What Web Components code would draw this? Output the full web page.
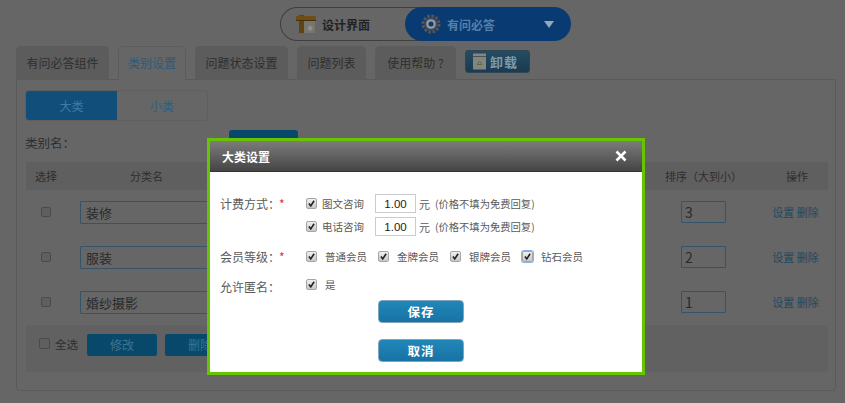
<!DOCTYPE html>
<html lang="zh">
<head>
<meta charset="utf-8">
<title>类别设置</title>
<style>
  html, body { margin: 0; height: 100%; background: #666; }
  body { font: 12px "Noto Sans CJK SC", "Liberation Sans", sans-serif; overflow: hidden; }
</style>
</head>
<body>
<app-page></app-page>

<script>
// small helper so each class just declares its shadow html
class Base extends HTMLElement {
    connectedCallback() {
        if (!this.shadowRoot) this.attachShadow({ mode: 'open' }).innerHTML = this.render();
    }
}

class CheckBox extends Base {
    render() {
        const on = this.hasAttribute('checked');
        const focus = this.hasAttribute('focus');
        return `
            <style>
                :host { display: inline-block; width: var(--size, 11px); height: var(--size, 11px); flex: none; }
                .b { box-sizing: border-box; width: 100%; height: 100%; border-radius: 2px;
                     border: 1px solid ${on ? '#a5a5a5' : '#4a4a4a'};
                     background: ${on ? 'linear-gradient(#f0f0f0,#c8c8c8)' : '#5f5f5f'};
                     ${focus ? 'box-shadow: 0 0 0 1px #8fb0ea;' : ''} }
                svg { display: block; width: 100%; height: 100%; }
            </style>
            <div class="b">${on ? '<svg viewBox="0 0 11 11"><path d="M2.3 5.6 4.6 8.4 8.7 2.2" fill="none" stroke="#222" stroke-width="2"/></svg>' : ''}</div>`;
    }
}

class SwitchBar extends Base {
    render() {
        return `
            <style>
                :host { display: flex; margin-left: 280px; height: 34px; font-size: 12px; font-weight: 700; }
                .left { box-sizing: border-box; width: 140px; border: 1px solid #3f3f3f; border-right: 0;
                        border-radius: 17px 0 0 17px; display: flex; align-items: center; padding-left: 15px; gap: 6px; color: #222; }
                .right { width: 166px; margin-left: -15px; background: #0a3a72; border-radius: 17px; display: flex;
                         align-items: center; padding-left: 16px; box-sizing: border-box; color: #5580ab; }
                .right span { margin-left: 6px; }
                .tri { width: 0; height: 0; border: 5.5px solid transparent; border-top: 7px solid #93a8bd; border-bottom: 0; margin-left: 49px; }
            </style>
            <div class="left">
                <svg width="20" height="20" viewBox="0 0 20 20">
                    <rect x="8" y="5" width="11" height="14" fill="#77756e"/>
                    <path d="M11 15l3-4 3 3-2 3z" fill="#908e87"/>
                    <rect x="3" y="1" width="5" height="18" fill="#5f4312"/>
                    <rect x="0" y="2" width="20" height="5" fill="#6d4e16"/>
                    <rect x="0" y="6" width="20" height="1" fill="#463009"/>
                </svg>
                设计界面
            </div>
            <div class="right">
                <svg width="20" height="20" viewBox="0 0 20 20">
                    <circle cx="10" cy="10" r="8" fill="none" stroke="#55575a" stroke-width="3" stroke-dasharray="2.6 1.6"/>
                    <circle cx="10" cy="10" r="6.6" fill="#47494b"/>
                    <circle cx="10" cy="10" r="4.8" fill="#8b9cab"/>
                    <circle cx="10" cy="10" r="2.5" fill="#103a6a"/>
                </svg>
                <span>有问必答</span>
                <div class="tri"></div>
            </div>`;
    }
}

class TabStrip extends Base {
    render() {
        const tabs = ['有问必答组件', '类别设置', '问题状态设置', '问题列表'];
        return `
            <style>
                :host { display: flex; margin: 5px 0 0 16px; height: 34px; gap: 9px; position: relative; z-index: 1; }
                .t { padding: 0 10.5px; height: 34px; line-height: 34px; box-sizing: border-box; background: #5c5c5c; color: #2e2e2e;
                     border-radius: 5px 5px 0 0; white-space: nowrap; }
                .help { width: 81px; padding: 0; text-align: center; }
                .on { background: #666; color: #2c5a7c; border: 1px solid #5c5c5c; border-bottom: 0; padding: 0 9px; line-height: 32px; height: 35px; }
                .un { margin-top: 4px; height: 23px; width: 65px; box-sizing: border-box; border: 1px solid #2d4657; border-radius: 3px;
                      background: linear-gradient(#264b61,#1a3b50); display: flex; align-items: center; padding-left: 6px; gap: 3px;
                      color: #7f99a9; font-size: 13px; font-weight: 700; letter-spacing: 1px; }
            </style>
            ${tabs.map((t, i) => `<div class="t ${i == 1 ? 'on' : ''}">${t}</div>`).join('')}
            <div class="t help">使用帮助 ?</div>
            <div class="un">
                <svg width="15" height="17" viewBox="0 0 15 17">
                    <rect x="1" y="0.5" width="13" height="16" fill="#85857f"/>
                    <rect x="1" y="3" width="13" height="1" fill="#4f4f4f"/>
                    <path d="M5 11.5 7.5 8 10 11.5z" fill="none" stroke="#566f4a" stroke-width="1"/>
                </svg>
                卸载
            </div>`;
    }
}

class SubTabs extends Base {
    render() {
        return `
            <style>
                :host { display: flex; width: 183px; height: 31px; box-sizing: border-box; border: 1px solid #5f5f5f; border-radius: 3px; text-align: center; line-height: 29px; }
                div { flex: 1; color: #2c5f88; }
                .on { flex: none; width: 91px; background: #114f7a; color: #427aa3; border-radius: 3px 0 0 3px; }
            </style>
            <div class="on">大类</div><div>小类</div>`;
    }
}

class CatRow extends Base {
    render() {
        return `
            <style>
                :host { display: grid; grid-template-columns: 55px 560px 125px 62px; height: 45px; align-items: start; color: #333; }
                check-box { --size: 10px; margin: 6px 0 0 15px; }
                input { box-sizing: border-box; font: 13px "Noto Sans CJK SC", "Liberation Sans", sans-serif; color: #2a2a2a; background: #666;
                        border: 1px solid #35546a; height: 23px; padding: 0 5px; outline: 0; display: block; border-radius: 1px; }
                .name { width: 300px; margin-left: -1px; }
                .sort { width: 45px; margin-left: 40px; font-size: 14px; height: 22px; padding: 0 3px; }
                .ops { color: #234860; font-size: 11px; line-height: 22px; text-align: center; padding-right: 3px; white-space: nowrap; }
            </style>
            <check-box></check-box>
            <input class="name" value="${this.getAttribute('name')}">
            <input class="sort" value="${this.getAttribute('sort')}">
            <div class="ops">设置 删除</div>`;
    }
}

class CatTable extends Base {
    render() {
        return `
            <style>
                :host { display: block; width: 802px; margin-left: 9px; }
                .head { display: grid; grid-template-columns: 40px 575px 125px 62px; height: 28px; line-height: 28px; background: #5f5f5f; color: #2e2e2e; margin-bottom: 11px; }
                .head div { text-align: center; white-space: nowrap; font-size: 11px; }
                .head .n { text-align: left; padding-left: 64px; }
                .foot { background: #616161; height: 47px; margin-top: -11px; display: flex; align-items: flex-start; padding: 9px 0 0 13px; box-sizing: border-box; color: #2e2e2e; }
                .foot check-box { margin-top: 4px; }
                .all { margin: 2px 9px 0 5px; font-size: 11.5px; }
                .btn { width: 70px; height: 22px; line-height: 22px; background: #08486a; color: #3f7590; text-align: center; border-radius: 2px; margin-right: 8px; }
            </style>
            <div class="head"><div>选择</div><div class="n">分类名</div><div>排序（大到小）</div><div>操作</div></div>
            <cat-row name="装修" sort="3"></cat-row>
            <cat-row name="服装" sort="2"></cat-row>
            <cat-row name="婚纱摄影" sort="1"></cat-row>
            <div class="foot"><check-box></check-box><span class="all">全选</span><div class="btn">修改</div><div class="btn">删除</div></div>`;
    }
}

class CatPanel extends Base {
    render() {
        return `
            <style>
                :host { display: block; box-sizing: border-box; width: 820px; height: 312px; margin-left: 16px; margin-top: -1px;
                        border: 1px solid #5a5a5a; border-radius: 0 0 4px 4px; padding-top: 10px; }
                sub-tabs { margin-left: 8px; }
                .filter { display: flex; height: 41px; margin-left: 8px; color: #2e2e2e; font-size: 12.5px; }
                .filter span { margin-top: 12px; width: 204px; }
                .add { width: 69px; height: 24px; background: #08486a; border-radius: 3px 3px 0 0; margin-top: 9px; }
            </style>
            <sub-tabs></sub-tabs>
            <div class="filter"><span>类别名：</span><div class="add"></div></div>
            <cat-table></cat-table>`;
    }
}

class BlueBtn extends Base {
    render() {
        return `
            <style>
                :host { display: block; width: 86px; height: 23px; box-sizing: border-box; border: 1px solid #7fa6bd; border-radius: 4px;
                        background: linear-gradient(#2187b8,#1872a5); color: #fff; font-weight: 700; font-size: 12.5px; line-height: 21px; text-align: center; letter-spacing: 1px; }
            </style>
            <slot></slot>`;
    }
}

class SettingsDialog extends Base {
    render() {
        const fee = t => `
            <div class="fee"><check-box checked></check-box><span class="ft">${t}</span>
            <input value="1.00"><span class="yuan">元</span><span class="note">(价格不填为免费回复)</span></div>`;
        const member = (t, f) => `<check-box checked ${f ? 'focus' : ''}></check-box><span class="mt">${t}</span>`;
        return `
            <style>
                :host { position: absolute; left: 207px; top: 138px; width: 438px; height: 237px; box-sizing: border-box;
                        border: 3px solid #66c500; background: #fff; color: #5a5a5a; font-size: 10.5px; }
                header { height: 31px; background: linear-gradient(#7c7c7c,#454545); border-bottom: 1px solid #333; box-sizing: border-box;
                         display: flex; align-items: center; justify-content: space-between; padding: 0 15px 0 12px; color: #fff; font-weight: 700; font-size: 12px; }
                header svg { display: block; }
                .form { display: grid; grid-template-columns: 96px 1fr; padding: 22px 0 0 0; }
                .lab { padding-left: 10px; font-size: 12px; color: #5a5a5a; }
                .lab b { color: #d33; font-weight: 400; margin-left: -1px; }
                .lab.a { padding-top: 0; line-height: 19px; }
                .fee { display: flex; align-items: center; height: 19px; margin-bottom: 4px; }
                .ft { margin-left: 5px; width: 53px; white-space: nowrap; }
                input { box-sizing: border-box; width: 41px; height: 19px; border: 1px solid #ccc; padding: 0; text-align: center;
                        font: 11.5px "Liberation Sans", sans-serif; color: #222; outline: 0; }
                .yuan { margin-left: 3px; width: 16px; font-size: 11px; }
                .note { font-size: 10.3px; white-space: nowrap; }
                .members { display: flex; align-items: center; height: 19px; }
                .mt { margin: 0 12px 0 8px; width: 41px; white-space: nowrap; }
                .r2 { margin-top: 7px; }
                .r3 { margin-top: 11px; }
                .btns { display: flex; flex-direction: column; gap: 16px; margin: 4px 0 0 168px; }
            </style>
            <header><span>大类设置</span>
                <svg width="12" height="12" viewBox="0 0 12 12"><path d="M1.5 1.5l9 9M10.5 1.5l-9 9" stroke="#fff" stroke-width="2.6"/></svg>
            </header>
            <div class="form">
                <div class="lab a">计费方式：<b>*</b></div>
                <div>${fee('图文咨询')}${fee('电话咨询')}</div>
                <div class="lab a r2">会员等级：<b>*</b></div>
                <div class="members r2">${member('普通会员')}${member('金牌会员')}${member('银牌会员')}${member('钻石会员', 1)}</div>
                <div class="lab a r3">允许匿名：</div>
                <div class="members r3" style="height:15px">${member('是')}</div>
            </div>
            <div class="btns"><blue-btn>保存</blue-btn><blue-btn>取消</blue-btn></div>`;
    }
}

class AppPage extends Base {
    render() {
        return `
            <style>
                :host { display: block; position: relative; width: 845px; height: 403px; padding-top: 7px; box-sizing: border-box; }
            </style>
            <switch-bar></switch-bar>
            <tab-strip></tab-strip>
            <cat-panel></cat-panel>
            <settings-dialog></settings-dialog>`;
    }
}

// children first, so nothing upgrades half way
customElements.define('check-box', CheckBox);
customElements.define('switch-bar', SwitchBar);
customElements.define('tab-strip', TabStrip);
customElements.define('sub-tabs', SubTabs);
customElements.define('cat-row', CatRow);
customElements.define('cat-table', CatTable);
customElements.define('cat-panel', CatPanel);
customElements.define('blue-btn', BlueBtn);
customElements.define('settings-dialog', SettingsDialog);
customElements.define('app-page', AppPage);
</script>
</body>
</html>
